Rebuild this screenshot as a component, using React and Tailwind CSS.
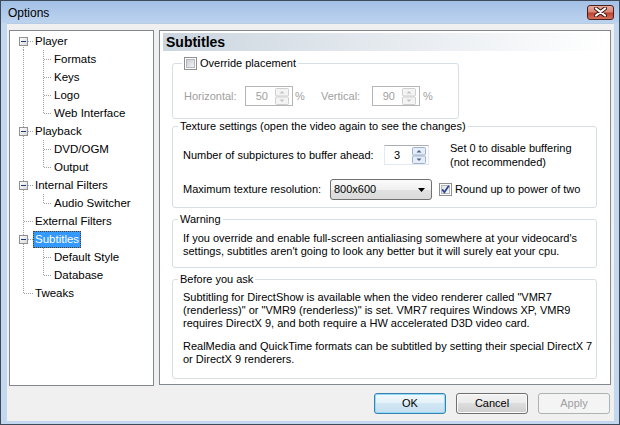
import React from 'react';

const TREE = [
  { label: 'Player', level: 0, first: true },
  { label: 'Formats', level: 1 },
  { label: 'Keys', level: 1 },
  { label: 'Logo', level: 1 },
  { label: 'Web Interface', level: 1, lastChild: true },
  { label: 'Playback', level: 0 },
  { label: 'DVD/OGM', level: 1 },
  { label: 'Output', level: 1, lastChild: true },
  { label: 'Internal Filters', level: 0 },
  { label: 'Audio Switcher', level: 1, lastChild: true },
  { label: 'External Filters', level: 0, leaf: true },
  { label: 'Subtitles', level: 0, selected: true },
  { label: 'Default Style', level: 1 },
  { label: 'Database', level: 1, lastChild: true },
  { label: 'Tweaks', level: 0, leaf: true, last: true },
];

const DOT = { stroke: '#a0a0a0', strokeWidth: 1, strokeDasharray: '1 1', shapeRendering: 'crispEdges' };

function TreeLines({ item }) {
  const w = item.level === 0 ? 23 : 42;
  return (
    <svg width={w} height="18" className="shrink-0">
      <line x1="13.5" x2="13.5" y1={item.first ? 9 : 0} y2={item.last ? 10 : 18} {...DOT} />
      {item.level === 0 && <line x1="14" x2="23" y1="9.5" y2="9.5" {...DOT} />}
      {item.level === 1 && (
        <>
          <line x1="33.5" x2="33.5" y1="0" y2={item.lastChild ? 10 : 18} {...DOT} />
          <line x1="34" x2="42" y1="9.5" y2="9.5" {...DOT} />
        </>
      )}
      {item.level === 0 && !item.leaf && (
        <>
          <defs>
            <linearGradient id="tbox" x1="0" y1="0" x2="1" y2="1">
              <stop offset="0" stopColor="#ffffff" />
              <stop offset="1" stopColor="#d8d8d8" />
            </linearGradient>
          </defs>
          <rect x="9.5" y="5.5" width="8" height="8" fill="url(#tbox)" stroke="#919191" shapeRendering="crispEdges" />
          <line x1="11" x2="16" y1="9.5" y2="9.5" stroke="#1c3a82" shapeRendering="crispEdges" />
        </>
      )}
    </svg>
  );
}

function Tree() {
  return (
    <div className="w-[145px] h-[356px] shrink-0 bg-white border border-[#828790] pt-[1px] text-[11.5px]">
      {TREE.map((item) => (
        <div key={item.label} className="flex items-center h-[18px]">
          <TreeLines item={item} />
          <span
            className={
              item.selected
                ? 'h-[17px] leading-[15px] px-[1px] border border-dotted border-[#5a3a10] bg-[#3399ff] text-white whitespace-nowrap'
                : 'h-[17px] leading-[15px] px-[1px] border border-transparent whitespace-nowrap'
            }
          >
            {item.label}
          </span>
        </div>
      ))}
    </div>
  );
}

function SpinButtons({ disabled }) {
  const fill = disabled ? '#f4f4f4' : '#e4edf8';
  const stroke = disabled ? '#cfcfcf' : '#9cb2cf';
  const arrow = disabled ? '#c3c3c3' : '#4d6185';
  return (
    <svg width="14" height="17" className="shrink-0">
      <rect x="0.5" y="0.5" width="13" height="7.5" fill={fill} stroke={stroke} rx="1" />
      <rect x="0.5" y="9" width="13" height="7.5" fill={fill} stroke={stroke} rx="1" />
      <path d="M4.5 5.5 L7 3 L9.5 5.5 Z" fill={arrow} />
      <path d="M4.5 11.5 L7 14 L9.5 11.5 Z" fill={arrow} />
    </svg>
  );
}

function Spin({ value, disabled }) {
  return (
    <div
      className={
        disabled
          ? 'flex items-center h-[20px] w-[48px] shrink-0 border border-[#b5b5b5] bg-white pr-[3px]'
          : 'flex items-center h-[20px] w-[45px] shrink-0 border border-[#e3e9ef] border-t-[#abadb3] bg-white pr-[2px]'
      }
    >
      <span className={disabled ? 'flex-1 text-right pr-[7px] text-[#a0a0a0]' : 'flex-1 text-right pr-[12px]'}>{value}</span>
      <SpinButtons disabled={disabled} />
    </div>
  );
}

function CheckBox({ checked }) {
  return (
    <svg width="13" height="13" className="shrink-0">
      <defs>
        <linearGradient id={checked ? 'cbon' : 'cboff'} x1="0" y1="0" x2="1" y2="1">
          <stop offset="0" stopColor={checked ? '#dfe3ea' : '#c6cad0'} />
          <stop offset="1" stopColor="#f7f7f7" />
        </linearGradient>
      </defs>
      <rect x="0.5" y="0.5" width="12" height="12" fill="#fff" stroke="#8e8f8f" shapeRendering="crispEdges" />
      <rect x="2.5" y="2.5" width="8" height="8" fill={checked ? 'url(#cbon)' : 'url(#cboff)'} stroke="#b4b7bc" shapeRendering="crispEdges" />
      {checked && <path d="M3.2 6.4 L5.4 9.2 L9.8 2.8" fill="none" stroke="#2c4a94" strokeWidth="1.8" />}
    </svg>
  );
}

function Combo() {
  return (
    <div className="flex items-center justify-between w-[102px] h-[21px] shrink-0 rounded-[3px] border border-[#707070] bg-[linear-gradient(to_bottom,#fbfbfb_0%,#f0f0f0_50%,#e2e2e2_50%,#dadada_100%)] pl-[3px] pr-[6px]">
      <span>800x600</span>
      <svg width="7" height="4">
        <path d="M0 0 L7 0 L3.5 4 Z" fill="#000" />
      </svg>
    </div>
  );
}

function Button({ children, primary, disabled }) {
  if (disabled) {
    return (
      <button type="button" className="w-[72px] h-[21px] rounded-[3px] border border-[#adb2b5] bg-[#f4f4f4] text-[#a0a0a0]">
        {children}
      </button>
    );
  }
  return (
    <button
      type="button"
      className={
        primary
          ? 'w-[72px] h-[21px] rounded-[3px] border border-[#3c7fb1] shadow-[inset_0_0_0_1px_#8fdcf6] bg-[linear-gradient(to_bottom,#f0f8fc_0%,#e4f1f9_50%,#d2e7f3_50%,#c6def0_100%)]'
          : 'w-[72px] h-[21px] rounded-[3px] border border-[#707070] shadow-[inset_0_0_0_1px_#fbfbfb] bg-[linear-gradient(to_bottom,#f2f2f2_0%,#ebebeb_50%,#dddddd_50%,#cfcfcf_100%)]'
      }
    >
      {children}
    </button>
  );
}

function CloseButton() {
  return (
    <div className="w-[27px] h-[15px] rounded-[3px] border border-[#4b1f1a] bg-[linear-gradient(to_bottom,#e8ab9f_0%,#d88675_45%,#c0422e_55%,#d3705e_100%)] flex items-center justify-center">
      <svg width="13" height="10">
        <path d="M2 1.5 L11 8.5 M11 1.5 L2 8.5" stroke="#3a1a16" strokeWidth="4" strokeLinecap="round" />
        <path d="M2 1.5 L11 8.5 M11 1.5 L2 8.5" stroke="#ffffff" strokeWidth="2.2" strokeLinecap="round" />
      </svg>
    </div>
  );
}

export default function App() {
  return (
    <div className="w-[620px] h-[425px] flex flex-col bg-[#c3d7ee] border border-[#3d4a5a] font-['Liberation_Sans',Arial,sans-serif] text-[11px] leading-[13px] text-black overflow-hidden">
      <div className="h-[22px] shrink-0 flex items-center justify-between pl-[7px] pr-[5px] bg-[linear-gradient(to_bottom,#a3c0e6,#bcd3ee)]">
        <span className="text-[12px] pt-[2px]">Options</span>
        <CloseButton />
      </div>

      <div className="flex-1 flex flex-col ml-[6px] mr-[5px] mb-[3px] bg-[#f0f0f0] border-t border-[#b7cbe3]">
        <div className="flex gap-[5px] pt-[6px] pl-[2px]">
          <Tree />

          <div className="w-[452px] h-[355px] shrink-0 bg-white border border-[#828790] pt-[2px] px-[3px]">
            <div className="h-[18px] pl-[3px] text-[14px] leading-[18px] font-bold bg-[linear-gradient(to_right,#cbd5df,#ffffff)]">
              Subtitles
            </div>

            <div className="pl-[9px]">
              <fieldset className="w-[287px] mt-[6px] border border-[#d5dfe5] rounded-[3px]">
                <legend className="ml-[9px] px-[2px] flex items-center gap-[3px]">
                  <CheckBox />
                  <span>Override placement</span>
                </legend>
                <div className="flex items-center pl-[11px] pt-[16px] pb-[12px] text-[#a0a0a0]">
                  <span className="w-[61px]">Horizontal:</span>
                  <Spin value="50" disabled />
                  <span className="ml-[2px] w-[26px]">%</span>
                  <span className="w-[51px]">Vertical:</span>
                  <Spin value="90" disabled />
                  <span className="ml-[3px]">%</span>
                </div>
              </fieldset>

              <fieldset className="w-[425px] mt-[1px] border border-[#d5dfe5] rounded-[3px]">
                <legend className="ml-[5px] px-[2px]">Texture settings (open the video again to see the changes)</legend>
                <div className="pl-[10px] pt-[8px] pb-[7px]">
                  <div className="flex items-center">
                    <span className="w-[201px]">Number of subpictures to buffer ahead:</span>
                    <Spin value="3" />
                    <span className="ml-[21px] leading-[14px]">
                      Set 0 to disable buffering
                      <br />
                      (not recommended)
                    </span>
                  </div>
                  <div className="flex items-center mt-[10px]">
                    <span className="w-[147px]">Maximum texture resolution:</span>
                    <Combo />
                    <span className="ml-[7px] flex items-center gap-[3px]">
                      <CheckBox checked />
                      <span>Round up to power of two</span>
                    </span>
                  </div>
                </div>
              </fieldset>

              <fieldset className="w-[425px] mt-[5px] border border-[#d5dfe5] rounded-[3px]">
                <legend className="ml-[5px] px-[2px]">Warning</legend>
                <p className="pl-[10px] pt-[6px] pb-[9px] whitespace-nowrap">
                  If you override and enable full-screen antialiasing somewhere at your videocard's
                  <br />
                  settings, subtitles aren't going to look any better but it will surely eat your cpu.
                </p>
              </fieldset>

              <fieldset className="w-[425px] mt-[5px] border border-[#d5dfe5] rounded-[3px]">
                <legend className="ml-[5px] px-[2px]">Before you ask</legend>
                <div className="pl-[10px] pt-[5px] pb-[12px] whitespace-nowrap">
                  <p>
                    Subtitling for DirectShow is available when the video renderer called "VMR7
                    <br />
                    (renderless)" or "VMR9 (renderless)" is set. VMR7 requires Windows XP, VMR9
                    <br />
                    requires DirectX 9, and both require a HW accelerated D3D video card.
                  </p>
                  <p className="mt-[10px]">
                    RealMedia and QuickTime formats can be subtitled by setting their special DirectX 7
                    <br />
                    or DirectX 9 renderers.
                  </p>
                </div>
              </fieldset>
            </div>
          </div>
        </div>

        <div className="flex justify-end gap-[10px] mt-auto mb-[7px] mr-[4px]">
          <Button primary>OK</Button>
          <Button>Cancel</Button>
          <Button disabled>Apply</Button>
        </div>
      </div>
    </div>
  );
}
